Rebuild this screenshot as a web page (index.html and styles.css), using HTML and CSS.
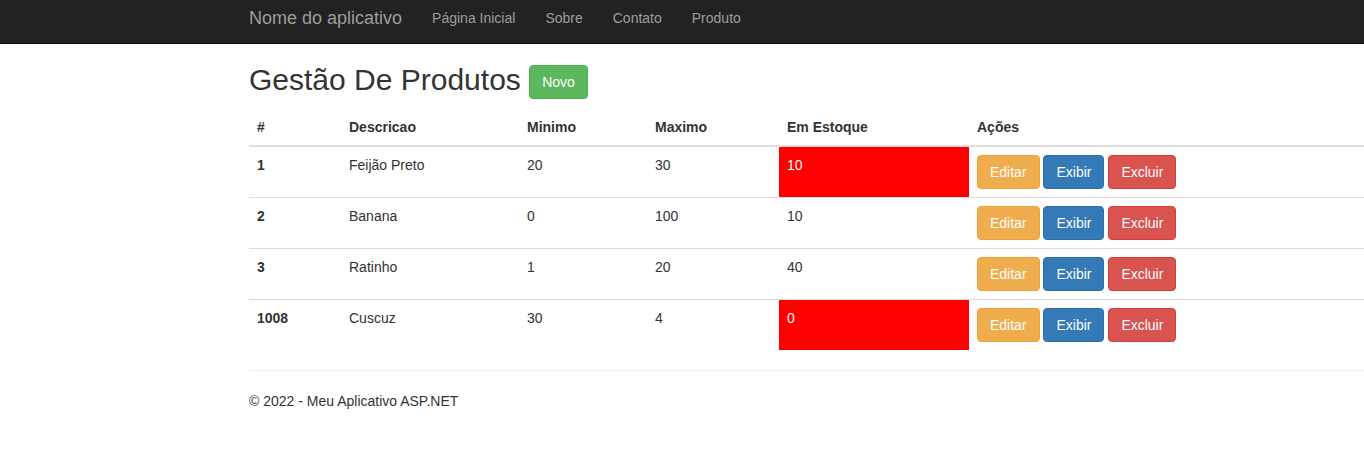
FILE: index.html
```html
<!DOCTYPE html>
<html lang="pt-br">
<head>
<meta charset="utf-8">
<title>Gestão De Produtos</title>
<link rel="stylesheet" href="styles.css">
</head>
<body>
<nav class="navbar">
  <div class="navbar-inner">
    <a class="navbar-brand" href="#">Nome do aplicativo</a>
    <ul class="nav">
      <li><a href="#">Página Inicial</a></li>
      <li><a href="#">Sobre</a></li>
      <li><a href="#">Contato</a></li>
      <li><a href="#">Produto</a></li>
    </ul>
  </div>
</nav>
<div class="body-content">
  <h2 class="title">Gestão De Produtos <a class="btn btn-success" href="#">Novo</a></h2>
  <table class="table">
    <colgroup>
      <col class="c-id"><col class="c-desc"><col class="c-min"><col class="c-max"><col class="c-stock"><col>
    </colgroup>
    <thead>
      <tr><th>#</th><th>Descricao</th><th>Minimo</th><th>Maximo</th><th>Em Estoque</th><th>Ações</th></tr>
    </thead>
    <tbody>
      <tr>
        <th>1</th><td>Feijão Preto</td><td>20</td><td>30</td><td class="low-stock">10</td>
        <td><a class="btn btn-warning" href="#">Editar</a> <a class="btn btn-primary" href="#">Exibir</a> <a class="btn btn-danger" href="#">Excluir</a></td>
      </tr>
      <tr>
        <th>2</th><td>Banana</td><td>0</td><td>100</td><td>10</td>
        <td><a class="btn btn-warning" href="#">Editar</a> <a class="btn btn-primary" href="#">Exibir</a> <a class="btn btn-danger" href="#">Excluir</a></td>
      </tr>
      <tr>
        <th>3</th><td>Ratinho</td><td>1</td><td>20</td><td>40</td>
        <td><a class="btn btn-warning" href="#">Editar</a> <a class="btn btn-primary" href="#">Exibir</a> <a class="btn btn-danger" href="#">Excluir</a></td>
      </tr>
      <tr>
        <th>1008</th><td>Cuscuz</td><td>30</td><td>4</td><td class="low-stock">0</td>
        <td><a class="btn btn-warning" href="#">Editar</a> <a class="btn btn-primary" href="#">Exibir</a> <a class="btn btn-danger" href="#">Excluir</a></td>
      </tr>
    </tbody>
  </table>
  <hr class="rule">
  <footer class="footer">
    <p>© 2022 - Meu Aplicativo ASP.NET</p>
  </footer>
</div>
</body>
</html>
```

FILE: styles.css
```css
* { box-sizing: border-box; }
html, body { margin: 0; padding: 0; overflow-x: hidden; }
body {
  font-family: "Liberation Sans", Arial, Helvetica, sans-serif;
  font-size: 14px;
  line-height: 20px;
  color: #333;
  background: #fff;
}
a { text-decoration: none; }

.navbar {
  height: 44px;
  background: #222;
  border-bottom: 1px solid #080808;
}
.navbar-inner {
  display: flex;
  padding-left: 234px;
}
.navbar-brand {
  display: block;
  padding: 8px 15px 15px 15px;
  font-size: 18px;
  line-height: 20px;
  color: #9d9d9d;
}
.nav {
  display: flex;
  list-style: none;
  margin: 0;
  padding: 0;
}
.nav a {
  display: block;
  padding: 8px 15px 15px 15px;
  line-height: 20px;
  color: #9d9d9d;
}

.body-content {
  padding-left: 249px;
}
.title {
  margin: 19px 0 10px 0;
  font-size: 30px;
  line-height: 1.1;
  font-weight: 500;
}

.btn {
  display: inline-block;
  padding: 6px 12px;
  font-size: 14px;
  line-height: 20px;
  font-weight: 400;
  text-align: center;
  vertical-align: middle;
  white-space: nowrap;
  border: 1px solid transparent;
  border-radius: 4px;
  color: #fff;
}
.btn-success { background: #5cb85c; border-color: #4cae4c; }
.btn-warning { background: #f0ad4e; border-color: #eea236; }
.btn-primary { background: #337ab7; border-color: #2e6da4; }
.btn-danger { background: #d9534f; border-color: #d43f3a; }

.table {
  width: 100%;
  table-layout: fixed;
  border-collapse: collapse;
  border-spacing: 0;
  margin-bottom: 20px;
}
.c-id { width: 92px; }
.c-desc { width: 178px; }
.c-min { width: 128px; }
.c-max { width: 132px; }
.c-stock { width: 190px; }
.table th, .table td {
  padding: 8px;
  line-height: 20px;
  text-align: left;
  vertical-align: top;
  border-top: 1px solid #ddd;
}
.table thead th {
  vertical-align: bottom;
  border-top: 0;
  border-bottom: 2px solid #ddd;
  font-weight: 700;
}
.table tbody th { font-weight: 700; }
.table .low-stock {
  background: #ff0000;
  color: #fff;
}

.rule {
  margin: 20px 0;
  border: 0;
  border-top: 1px solid #eee;
  height: 0;
}
.footer p { margin: 0 0 10px 0; }
```
